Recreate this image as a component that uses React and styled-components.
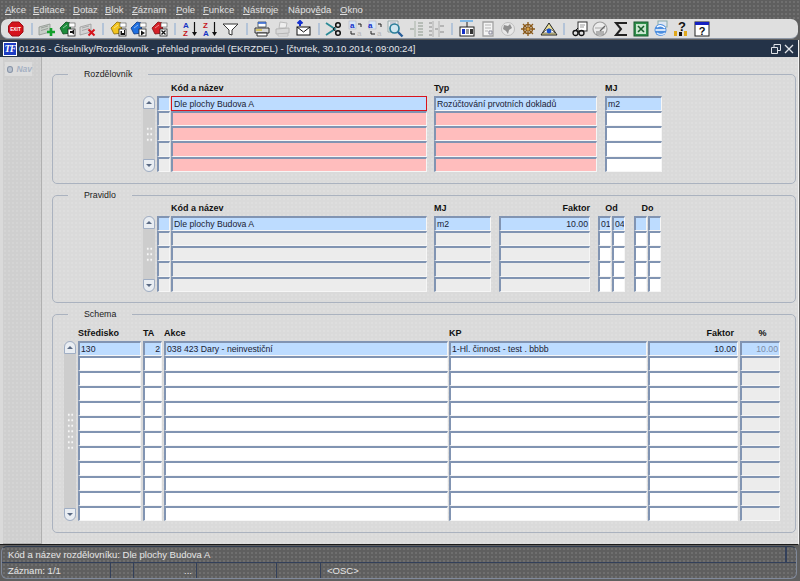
import React from 'react'
import styled, { createGlobalStyle, css } from 'styled-components'

const Global = createGlobalStyle`
  html, body { margin: 0; padding: 0; background: #5f5f5f; }
  body { font-family: "Liberation Sans", Arial, sans-serif; }
`

const dither = css`
  background-image: radial-gradient(rgba(255, 255, 255, 0.22) 0.6px, transparent 0.8px);
  background-size: 4px 4px;
`

const Page = styled.div`
  width: 800px;
  height: 581px;
  display: flex;
  flex-direction: column;
  overflow: hidden;
  background: #5f5f5f;
`

const MenuBar = styled.div`
  height: 19px;
  flex: none;
  display: flex;
  align-items: center;
  padding-left: 5px;
  font-size: 9.5px;
  color: #e0e0e0;
  ${dither}
  u { text-decoration-thickness: 1px; text-underline-offset: 1px; }
`

const MenuItem = styled.span`
  width: ${p => p.$w}px;
  flex: none;
`

const Toolbar = styled.div`
  height: 20px;
  flex: none;
  margin: 0 2px 0 1px;
  padding-left: 5px;
  display: flex;
  align-items: center;
  background: #dfdfdf;
  border-radius: 7px;
  border-bottom: 1px solid #8d97a6;
  box-sizing: border-box;
`

const Tool = styled.div`
  width: 20.4px;
  height: 18px;
  flex: none;
  display: flex;
  align-items: center;
  justify-content: center;
`

const ToolSep = styled.div`
  width: 10.6px;
  flex: none;
  display: flex;
  justify-content: center;
  &::before {
    content: '';
    width: 2px;
    height: 12px;
    background: #b4c4d8;
  }
`

const Win = styled.div`
  flex: none;
  height: 505px;
  margin: 1px 1px 0 0;
  display: flex;
  flex-direction: column;
  border-bottom: 1px solid #1a1a1a;
  border-right: 1px solid #f4f4f4;
  box-sizing: border-box;
`

const TitleBar = styled.div`
  height: 17px;
  flex: none;
  display: flex;
  align-items: center;
  padding: 0 3px;
  background: #243348;
  color: #e4e6ea;
  font-size: 9.55px;
`

const Logo = styled.div`
  width: 12px;
  height: 12px;
  margin-right: 2px;
  border: 1px solid #fff;
  background: #1c3cc4;
  color: #fff;
  font: italic bold 10px/12px "Liberation Serif", serif;
  text-align: center;
  letter-spacing: -1px;
`

const TitleText = styled.div`
  flex: 1;
`

const WinBtn = styled.svg`
  width: 12px;
  height: 12px;
  margin-left: 1px;
  fill: none;
  stroke: #dfe3e8;
`

const Body = styled.div`
  flex: 1;
  min-height: 0;
  display: flex;
  background: #dadada;
`

const Side = styled.div`
  width: 39px;
  flex: none;
  margin-left: 3px;
  padding: 5px 0 0 2px;
  box-sizing: border-box;
  background-color: #cfcfcf;
  border-right: 1px solid #b0b0b0;
  border-bottom: 1px solid #b0b0b0;
  ${dither}
`

const NavTab = styled.div`
  width: 27px;
  height: 14px;
  display: flex;
  align-items: center;
  gap: 3px;
  background: #dcdcdc;
  color: #a7b2c4;
  font-size: 8.5px;
  font-weight: bold;
  font-style: italic;
  &::before {
    content: '';
    width: 5px;
    height: 5px;
    margin-left: 2px;
    border-radius: 50%;
    border: 1px solid #8793a6;
    background: #b9c2cf;
  }
`

const Content = styled.div`
  flex: 1;
  min-width: 0;
  padding: 11px 2px 0 10px;
  display: flex;
  flex-direction: column;
  gap: 5px;
  ${dither}
`

const Frame = styled.fieldset`
  margin: 0;
  padding: 0;
  min-width: 0;
  height: ${p => p.$h}px;
  box-sizing: border-box;
  border: 1px solid #aab2bf;
  border-radius: 5px;
`

const Legend = styled.legend`
  margin-left: 15px;
  padding: 0 16px;
  height: 12px;
  line-height: 12px;
  font-size: 8.8px;
  color: #222;
`

const Inner = styled.div`
  padding-left: ${p => p.$pl}px;
`

const HeadRow = styled.div`
  display: flex;
  height: 14px;
  margin-top: ${p => p.$mt}px;
  margin-bottom: ${p => p.$mb || 0}px;
  margin-left: ${p => p.$ml}px;
  align-items: center;
`

const HeadCell = styled.div`
  width: ${p => p.$w}px;
  margin-left: ${p => p.$ml || 0}px;
  flex: none;
  font-size: 9px;
  font-weight: bold;
  color: #111;
  text-align: ${p => p.$align || 'left'};
`

const Table = styled.div`
  display: flex;
  margin-top: 1px;
  gap: 2px;
`

const Rows = styled.div`
  display: flex;
  flex-direction: column;
`

const Row = styled.div`
  display: flex;
  height: ${p => p.$h}px;
`

const tones = {
  blue: '#bddcff',
  pink: '#ffbdbd',
  white: '#ffffff',
  grey: '#ececec',
}

const Cell = styled.div`
  width: ${p => p.$w}px;
  margin-left: ${p => p.$ml || 0}px;
  flex: none;
  box-sizing: border-box;
  padding: 0 1px;
  border-top: 2px solid #8194b2;
  border-left: 2px solid #8194b2;
  border-right: 1px solid #f6f6f6;
  border-bottom: 1px solid #f6f6f6;
  background: ${p => tones[p.$tone]};
  color: ${p => (p.$muted ? '#7d8ca6' : '#1a2233')};
  font-size: 8.7px;
  line-height: 12.5px;
  white-space: nowrap;
  overflow: hidden;
  text-align: ${p => p.$align || 'left'};
  ${p => p.$active && css`
    border: 1px solid #d8141e;
    padding: 1px 2px 0 2px;
  `}
`

const Scroll = styled.div`
  width: 12px;
  flex: none;
  display: flex;
  flex-direction: column;
  align-items: stretch;
  background: #cdcdcd;
  border-radius: 6px;
`

const ScrollBtn = styled.div`
  height: 13px;
  flex: none;
  box-sizing: border-box;
  border: 1px solid #a0aec4;
  border-radius: ${p => (p.$down ? '0 0 6px 6px' : '6px 6px 0 0')};
  background: #e9edf2;
  display: flex;
  align-items: center;
  justify-content: center;
  &::before {
    content: '';
    border-left: 3px solid transparent;
    border-right: 3px solid transparent;
    ${p => (p.$down ? 'border-top: 3px solid #5a6a84;' : 'border-bottom: 3px solid #5a6a84;')}
  }
`

const Grip = styled.div`
  flex: 1;
  display: flex;
  align-items: center;
  justify-content: center;
  &::before {
    content: '';
    width: 7px;
    height: ${p => p.$h}px;
    background-image: radial-gradient(#f7f7f7 0.8px, transparent 1px);
    background-size: 3.5px 5.5px;
  }
`

const Status = styled.div`
  flex: 1;
  margin: 1px 3px 3px 1px;
  border: 1px solid #80899a;
  border-top-color: #2d3a4f;
  border-radius: 6px;
  color: #e6e6e6;
  font-size: 9.5px;
  ${dither}
`

const StatusMsg = styled.div`
  height: 15px;
  display: flex;
  align-items: center;
  padding-left: 6px;
  border-bottom: 1px solid #33405a;
`

const MsgEnd = styled.div`
  margin-left: auto;
  margin-right: 9px;
  width: 2px;
  height: 100%;
  background: #33405a;
`

const StatusCells = styled.div`
  height: 15px;
  display: flex;
  align-items: center;
`

const StatusCell = styled.div`
  width: ${p => p.$w}px;
  height: 100%;
  flex: none;
  display: flex;
  align-items: center;
  box-sizing: border-box;
  padding-left: ${p => p.$pl || 0}px;
  border-right: ${p => (p.$last ? 'none' : '1px solid #33405a')};
`

// toolbar icons, all drawn on an 18x18 box
const Ico = ({ children, size = 18 }) => (
  <svg width={size} height={size} viewBox="0 0 18 18">{children}</svg>
)

const Stripes = ({ fill, line }) => (
  <g>
    <path d="M1 7l11-3v8L1 15z" fill={fill} stroke={line} strokeWidth=".8" />
    <path d="M3 8l7-2M3 10.5l7-2" stroke={line} strokeWidth=".8" />
  </g>
)

const Folder = ({ c, d }) => (
  <g>
    <path d="M1 8l6-6 4 1 1 10-8 1z" fill={c} stroke={d} strokeWidth=".8" />
    <path d="M4 8l4-3" stroke="#fff" strokeWidth=".7" opacity=".7" />
  </g>
)

const Box = ({ mark }) => (
  <g>
    <rect x="10" y="3" width="6" height="4" fill="#fff" stroke="#333" strokeWidth=".5" />
    <rect x="9" y="9" width="7" height="7" fill="#fff" stroke="#222" strokeWidth=".8" />
    {mark}
  </g>
)

const Sort = ({ top, bottom, topC, bottomC }) => (
  <g fontFamily="Liberation Sans" fontWeight="bold" fontSize="8">
    <text x="1" y="8" fill={topC}>{top}</text>
    <text x="1" y="16" fill={bottomC}>{bottom}</text>
    <path d="M12.5 2v12" stroke="#111" strokeWidth="1.2" />
    <path d="M10 12h5l-2.5 4z" fill="#111" />
  </g>
)

const BlueA = ({ flip }) => (
  <g>
    <rect x="3" y="1" width="7" height="8" fill="#d9e6f6" stroke="#aab" strokeWidth=".5" />
    <text x={flip ? 2 : 4} y="8" fontSize="8" fontWeight="bold" fill="#1530c8" fontFamily="Liberation Sans">a</text>
    <text x="11" y="16" fontSize="8" fill="#b8b8b8" fontFamily="Liberation Sans">a</text>
    <path d="M5 11v3h4M12 4h3v3" fill="none" stroke="#222" />
  </g>
)

const toolset = [
  <Ico><path d="M5 2h7l4 4v6l-4 4H5L1.500 12V6z" fill="#d5121c" stroke="#9c0d14" /><text x="8.500" y="11" textAnchor="middle" fontSize="4.800" fontWeight="bold" fill="#fff" fontFamily="Liberation Sans">EXIT</text></Ico>,
  '|',
  <Ico><Stripes fill="#c7cdc7" line="#8d938d" /><path d="M13 8v8M9 12h8" stroke="#13a02c" strokeWidth="2.600" /></Ico>,
  <Ico><Folder c="#1c8c3b" d="#0b4a1c" /><Box mark={<path d="M11 11h2l2-1.500v5l-2-1.500h-2z" fill="#111" />} /></Ico>,
  <Ico><Stripes fill="#d3d3d3" line="#9a9a9a" /><path d="M9.500 9.500l6 6M15.500 9.500l-6 6" stroke="#d5141c" strokeWidth="2" /></Ico>,
  '|',
  <Ico><Folder c="#f2c41e" d="#8a6a05" /><Box mark={<path d="M10.500 15v-4h1.500v2h2v-3h1v5z" fill="#111" />} /></Ico>,
  <Ico><Folder c="#1f6fe0" d="#0b3580" /><Box mark={<path d="M11 10.500l4 2.500-4 2.500z" fill="#111" />} /></Ico>,
  <Ico><Folder c="#d52027" d="#7d0d11" /><Box mark={<path d="M10.500 10.500l4 4M14.500 10.500l-4 4" stroke="#111" strokeWidth="1.300" />} /></Ico>,
  '|',
  <Ico><Sort top="A" bottom="Z" topC="#1735c4" bottomC="#c5141c" /></Ico>,
  <Ico><Sort top="Z" bottom="A" topC="#c5141c" bottomC="#1735c4" /></Ico>,
  <Ico><path d="M1 4h15l-6 6v5l-3-1v-4z" fill="#fff" stroke="#333" /></Ico>,
  '|',
  <Ico><path d="M5 2h8v5H5z" fill="#fff" stroke="#345" strokeWidth=".8" /><path d="M5 3h8" stroke="#2a60d0" strokeWidth="1.500" /><path d="M2 8h14v5H2z" fill="#d8d8d8" stroke="#333" /><path d="M4 13h10v3H4z" fill="#fff" stroke="#333" /><path d="M3 10h6" stroke="#d5b81a" strokeWidth="1.200" /></Ico>,
  <Ico><path d="M6 2l7 1-1 5H5z" fill="#eee" stroke="#bbb" /><path d="M2 9l13-1v5l-13 1z" fill="#d8d8d8" stroke="#b4b4b4" /><path d="M4 14h10v2H4z" fill="#eee" stroke="#bbb" /></Ico>,
  <Ico><rect x="3" y="7" width="13" height="8" fill="#fff" stroke="#111" /><path d="M3 7l6.500 5L16 7" fill="none" stroke="#111" /><path d="M6 1v5M3.500 3.500L6 1l2.500 2.500" fill="none" stroke="#1430d0" strokeWidth="2" /></Ico>,
  '|',
  <Ico><path d="M1 3l9 6-9 6" fill="none" stroke="#2b8a96" strokeWidth="1.800" /><circle cx="13" cy="5" r="2.300" fill="none" stroke="#111" strokeWidth="1.500" /><circle cx="13" cy="13" r="2.300" fill="none" stroke="#111" strokeWidth="1.500" /><path d="M11 6.500l-3 2.500 3 2.500" fill="none" stroke="#111" /></Ico>,
  <Ico><BlueA /></Ico>,
  <Ico><BlueA flip /></Ico>,
  <Ico><path d="M2 1h10v11H2z" fill="#e8eef0" stroke="#9aa" /><path d="M4 3h6M4 5h6" stroke="#aab" /><circle cx="8.500" cy="8.500" r="4.500" fill="#cfe6ef" stroke="#2a7f9a" strokeWidth="1.700" /><path d="M12 12l4.500 4.500" stroke="#2a5f9a" strokeWidth="2.400" /></Ico>,
  <Ico><path d="M8 1v16" stroke="#a8b3a8" /><path d="M11 3h5M11 6h5M11 9h5M11 12h5M11 15h5M3 9h4" stroke="#a9b1a9" strokeWidth="1.400" /></Ico>,
  <Ico><path d="M6 1v16M12 1v16" stroke="#b0b0b0" /><path d="M2 3h3M2 7h3M2 11h3M2 15h3M13 6h4M13 12h4M8 9h3" stroke="#a8a8a8" strokeWidth="1.400" /></Ico>,
  '|',
  <Ico><path d="M2 1h13" stroke="#5aa8e8" strokeWidth="1.400" /><rect x="2" y="7" width="14" height="9" fill="#fff" stroke="#222" /><path d="M9 2v5" stroke="#222" /><rect x="4" y="9" width="3" height="5" fill="#1530c8" /><rect x="8" y="9" width="3" height="5" fill="#999" /><rect x="12" y="9" width="3" height="5" fill="#333" /></Ico>,
  <Ico><path d="M4 2h10v14H4z" fill="#f4f4f4" stroke="#a3a3a3" strokeWidth="1.300" /><path d="M6 5h6M6 8h6M6 11h3" stroke="#b4b4b4" /><path d="M10 11h3v3h-3z" fill="none" stroke="#889" /></Ico>,
  <Ico><circle cx="9" cy="9" r="6.500" fill="#e8e8e8" stroke="#bdbdbd" /><path d="M5 5l4 1 2-2 2 4-3 2-1 4-2-3-3-2z" fill="#8f8f8f" /></Ico>,
  <Ico><circle cx="9" cy="9" r="4.500" fill="none" stroke="#8a5a1a" strokeWidth="1.500" /><path d="M9 2v14M2 9h14M4 4l10 10M14 4L4 14" stroke="#8a5a1a" strokeWidth="1.300" /><circle cx="9" cy="9" r="1.500" fill="#d8a040" /></Ico>,
  <Ico><path d="M9 3l8 12H1z" fill="#eadf9a" stroke="#222" /><path d="M3 13q6-8 12 0z" fill="#fff" stroke="#222" strokeWidth=".6" /><circle cx="9" cy="11" r="2.400" fill="#1750d0" /></Ico>,
  '|',
  <Ico><rect x="7" y="2" width="9" height="9" fill="#fff" stroke="#333" /><path d="M9 5h5M9 7h4" stroke="#999" /><circle cx="4.500" cy="13" r="2.500" fill="none" stroke="#111" strokeWidth="1.300" /><circle cx="10.500" cy="13" r="2.500" fill="none" stroke="#111" strokeWidth="1.300" /><path d="M7 12h1M5 10l2-2" stroke="#111" /></Ico>,
  <Ico><circle cx="9" cy="9" r="7" fill="#ececec" stroke="#9e9e9e" strokeWidth="1.200" /><path d="M4 8h10" stroke="#aaa" /><path d="M9 11l5-5" stroke="#666" strokeWidth="1.200" /><path d="M5 12h8M5 14h8" stroke="#777" /></Ico>,
  <Ico><path d="M15 3H4l5 6-5 6h11" fill="none" stroke="#222" strokeWidth="2" /></Ico>,
  <Ico><rect x="2" y="2" width="14" height="14" fill="#2e8f4a" stroke="#1d5c30" /><rect x="4" y="4" width="10" height="10" fill="#c9e6cf" /><path d="M6 6l6 6M12 6l-6 6" stroke="#17602c" strokeWidth="1.600" /></Ico>,
  <Ico><rect x="6" y="1" width="9" height="6" fill="#dde6f2" stroke="#8aa" /><circle cx="8.500" cy="10" r="6" fill="#4d8fe0" /><path d="M3.500 10h10M5 7q4-3 8 1" fill="none" stroke="#fff" strokeWidth="1.500" /><path d="M13 13q-4 3-8 0" fill="none" stroke="#dbe9fa" strokeWidth="1.500" /></Ico>,
  <Ico><text x="9" y="11" textAnchor="middle" fontSize="13" fontWeight="bold" fill="#111" fontFamily="Liberation Sans">?</text><rect x="1" y="11" width="3" height="5" fill="#e0a81c" /><rect x="6" y="12" width="3" height="4" fill="#111" /><rect x="11" y="11" width="3" height="5" fill="#e0a81c" /></Ico>,
  <Ico><rect x="2" y="2" width="14" height="14" fill="#fff" stroke="#222" /><rect x="2" y="2" width="14" height="3" fill="#1420c0" /><text x="9" y="15" textAnchor="middle" fontSize="11" fontWeight="bold" fill="#111" fontFamily="Liberation Sans">?</text></Ico>,
]

const menu = [
  ['A', 'kce', 28], ['E', 'ditace', 40], ['D', 'otaz', 32], ['B', 'lok', 27], ['Z', 'áznam', 44],
  ['P', 'ole', 27], ['F', 'unkce', 40], ['N', 'ástroje', 45], ['Nápov', 'ěda', 52], ['O', 'kno', 30],
]

const ruleCols1 = [
  { w: 13 }, { w: 256, ml: 1 }, { w: 163, ml: 7 }, { w: 57, ml: 8 },
]
const ruleCols2 = [
  { w: 13 }, { w: 256, ml: 1 }, { w: 57, ml: 7 }, { w: 91, ml: 8, align: 'right' },
  { w: 13, ml: 8 }, { w: 13, ml: 1 }, { w: 13, ml: 9 }, { w: 13, ml: 1 },
]
const ruleCols3 = [
  { w: 63 }, { w: 19, ml: 2, align: 'right' }, { w: 284, ml: 2 }, { w: 198, ml: 1 },
  { w: 90, ml: 1, align: 'right' }, { w: 40, ml: 2, align: 'right' },
]

const rows1 = [
  [['blue'], ['blue', 'Dle plochy Budova A', true], ['blue', 'Rozúčtování prvotních dokladů'], ['blue', 'm2']],
  ...Array(4).fill([['grey'], ['pink'], ['pink'], ['white']]),
]
const rows2 = [
  [['blue'], ['blue', 'Dle plochy Budova A'], ['blue', 'm2'], ['blue', '10.00'], ['blue', '01'], ['blue', '04'], ['blue'], ['blue']],
  ...Array(4).fill([['grey'], ['grey'], ['grey'], ['grey'], ['white'], ['white'], ['white'], ['white']]),
]
const rows3 = [
  [['blue', '130'], ['blue', '2'], ['blue', '038 423 Dary - neinvestiční'], ['blue', '1-Hl. činnost - test . bbbb'], ['blue', '10.00'], ['blue', '10.00', false, true]],
  ...Array(11).fill([['white'], ['white'], ['white'], ['white'], ['white'], ['grey']]),
]

const DataTable = ({ cols, rows, rowH = 15.15, grip = 16 }) => (
  <Table>
    <Scroll>
      <ScrollBtn />
      <Grip $h={grip} />
      <ScrollBtn $down />
    </Scroll>
    <Rows>
      {rows.map((row, r) => (
        <Row key={r} $h={rowH}>
          {row.map(([tone, text, active, muted], c) => (
            <Cell key={c} $w={cols[c].w} $ml={cols[c].ml} $align={cols[c].align} $tone={tone} $active={active} $muted={muted}>
              {text}
            </Cell>
          ))}
        </Row>
      ))}
    </Rows>
  </Table>
)

export default function App() {
  return (
    <Page>
      <Global />
      <MenuBar>
        {menu.map(([a, b, w], i) => (
          <MenuItem key={i} $w={w}>
            {i === 8 ? <>{a}<u>{b[0]}</u>{b.slice(1)}</> : <><u>{a}</u>{b}</>}
          </MenuItem>
        ))}
      </MenuBar>
      <Toolbar>
        {toolset.map((t, i) => (t === '|' ? <ToolSep key={i} /> : <Tool key={i}>{t}</Tool>))}
      </Toolbar>
      <Win>
        <TitleBar>
          <Logo>TF</Logo>
          <TitleText>01216 - Číselníky/Rozdělovník - přehled pravidel (EKRZDEL) - [čtvrtek, 30.10.2014; 09:00:24]</TitleText>
          <WinBtn viewBox="0 0 12 12"><path d="M1.500 4.500h6v6h-6zM4 4.500v-3h6.500v6h-3" /></WinBtn>
          <WinBtn viewBox="0 0 12 12"><path d="M2 2l8 8M10 2l-8 8" strokeWidth="1.300" /></WinBtn>
        </TitleBar>
        <Body>
          <Side><NavTab>Nav</NavTab></Side>
          <Content>
            <Frame $h={116}>
              <Legend>Rozdělovník</Legend>
              <Inner $pl={90}>
                <HeadRow $mt={1} $ml={28}>
                  <HeadCell $w={263}>Kód a název</HeadCell>
                  <HeadCell $w={171}>Typ</HeadCell>
                  <HeadCell $w={57}>MJ</HeadCell>
                </HeadRow>
                <DataTable cols={ruleCols1} rows={rows1} />
              </Inner>
            </Frame>
            <Frame $h={114}>
              <Legend>Pravidlo</Legend>
              <Inner $pl={90}>
                <HeadRow $mt={0} $mb={1} $ml={28}>
                  <HeadCell $w={263}>Kód a název</HeadCell>
                  <HeadCell $w={57}>MJ</HeadCell>
                  <HeadCell $w={91} $ml={8} $align="right">Faktor</HeadCell>
                  <HeadCell $w={27} $ml={8} $align="center">Od</HeadCell>
                  <HeadCell $w={27} $ml={9} $align="center">Do</HeadCell>
                </HeadRow>
                <DataTable cols={ruleCols2} rows={rows2} />
              </Inner>
            </Frame>
            <Frame $h={225}>
              <Legend>Schema</Legend>
              <Inner $pl={11}>
                <HeadRow $mt={6} $ml={14}>
                  <HeadCell $w={65}>Středisko</HeadCell>
                  <HeadCell $w={21}>TA</HeadCell>
                  <HeadCell $w={285}>Akce</HeadCell>
                  <HeadCell $w={199}>KP</HeadCell>
                  <HeadCell $w={86} $align="right">Faktor</HeadCell>
                  <HeadCell $w={45} $align="right">%&nbsp;&nbsp;&nbsp;&nbsp;&nbsp;</HeadCell>
                </HeadRow>
                <DataTable cols={ruleCols3} rows={rows3} rowH={15} grip={38} />
              </Inner>
            </Frame>
          </Content>
        </Body>
      </Win>
      <Status>
        <StatusMsg>
          Kód a název rozdělovníku: Dle plochy Budova A
          <MsgEnd />
        </StatusMsg>
        <StatusCells>
          <StatusCell $w={109} $pl={6}>Záznam: 1/1</StatusCell>
          <StatusCell $w={23} />
          <StatusCell $w={63} $pl={50}>...</StatusCell>
          <StatusCell $w={80} />
          <StatusCell $w={44} />
          <StatusCell $w={100} $pl={6} $last>&lt;OSC&gt;</StatusCell>
        </StatusCells>
      </Status>
    </Page>
  )
}
